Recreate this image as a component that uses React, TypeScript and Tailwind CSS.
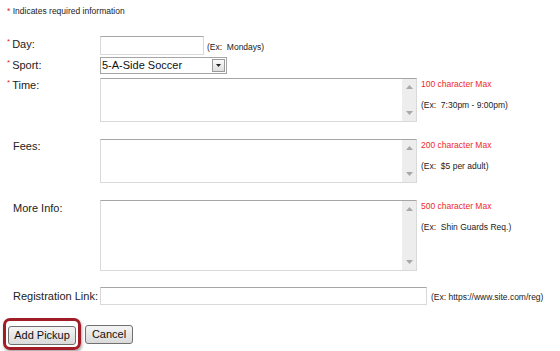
import type { ReactNode } from 'react'

const Req = () => <span className="mr-[2px] align-top text-[8px] leading-none text-[#e0252c]">*</span>

const Label = ({ text, required, className = '' }: { text: string; required?: boolean; className?: string }) => (
    <div className={`flex w-[100px] shrink-0 pl-[7px] text-[11px] leading-[13px] text-[#222] ${className}`}>
        {required ? <Req /> : <span className="w-[6px]" />}
        <span className="whitespace-nowrap">{text}</span>
    </div>
)

const Note = ({ children, red }: { children: ReactNode; red?: boolean }) => (
    <p className={`whitespace-pre text-[8.5px] leading-[10px] ${red ? 'text-[#ee2a2a]' : 'text-[#222]'}`}>{children}</p>
)

const Arrow = ({ down }: { down?: boolean }) => (
    <svg width="7" height="4" viewBox="0 0 7 4" className="mx-auto">
        <path d={down ? 'M0 0h7L3.5 4z' : 'M3.5 0L7 4H0z'} fill="#a8a8a8" />
    </svg>
)

const Area = ({ h, max, ex }: { h: string; max: string; ex: string }) => (
    <div className="flex">
        <div className={`flex w-[317px] ${h} border border-[#d9d9d9] border-t-[#a6a6a6] bg-white`}>
            <div className="flex-1" />
            <div className="flex w-[14px] flex-col justify-between bg-[#ededed] py-[6px]">
                <Arrow />
                <Arrow down />
            </div>
        </div>
        <div className="ml-[4px] pt-[1px]">
            <Note red>{max}</Note>
            <div className="h-[11px]" />
            <Note>{ex}</Note>
        </div>
    </div>
)

const btn =
    'h-[19px] rounded-[3px] border border-[#707070] bg-gradient-to-b from-[#f5f5f5] to-[#dadada] text-[11px] leading-none text-[#111]'

export default function App() {
    return (
        <div className="relative h-[351px] w-[560px] overflow-hidden bg-white font-['Liberation_Sans',Arial,sans-serif] text-[#222]">
            <p className="pl-[7px] pt-[7px] text-[8.5px] leading-[9px]">
                <span className="text-[#e0252c]">*</span> Indicates required information
            </p>

            {/* Day */}
            <div className="mt-[20px] flex h-[19px] items-center">
                <Label text="Day:" required className="-mt-[2px]" />
                <div className="h-[19px] w-[104px] border border-[#d9d9d9] border-t-[#a6a6a6] bg-white" />
                <span className="ml-[3px] mt-[3px] whitespace-pre text-[8.5px]">(Ex:  Mondays)</span>
            </div>

            {/* Sport */}
            <div className="mt-[2px] flex h-[17px] items-center">
                <Label text="Sport:" required />
                <div className="flex h-[17px] w-[127px] items-center border border-[#a5a5a5] bg-white pl-[1px] pr-[1px]">
                    <span className="flex-1 text-[11px] leading-none text-[#111]">5-A-Side Soccer</span>
                    <div className="flex h-[13px] w-[13px] items-center justify-center border border-[#9a9a9a] bg-gradient-to-b from-[#fbfbfb] to-[#dedede]">
                        <svg width="5" height="3" viewBox="0 0 5 3">
                            <path d="M0 0h5L2.5 3z" fill="#222" />
                        </svg>
                    </div>
                </div>
            </div>

            {/* Time */}
            <div className="mt-[4px] flex">
                <Label text="Time:" required className="pt-[1px]" />
                <Area h="h-[44px]" max="100 character Max" ex="(Ex:  7:30pm - 9:00pm)" />
            </div>

            {/* Fees */}
            <div className="mt-[17px] flex">
                <Label text="Fees:" className="pt-[1px]" />
                <Area h="h-[44px]" max="200 character Max" ex="(Ex:  $5 per adult)" />
            </div>

            {/* More Info */}
            <div className="mt-[17px] flex">
                <Label text="More Info:" className="pt-[2px]" />
                <Area h="h-[71px]" max="500 character Max" ex="(Ex:  Shin Guards Req.)" />
            </div>

            {/* Registration Link */}
            <div className="mt-[16px] flex h-[18px] items-center">
                <Label text="Registration Link:" />
                <div className="h-[18px] w-[327px] border border-[#d9d9d9] border-t-[#a6a6a6] bg-white" />
                <span className="ml-[4px] mt-[2px] text-[8.5px]">(Ex: https://www.site.com/reg)</span>
            </div>

            {/* Buttons */}
            <div className="mt-[13px] flex items-center pl-[3px]">
                <div className="rounded-[7px] border-[3px] border-[#a01c26] px-[2px] py-[1px] shadow-[1px_2px_3px_rgba(0,0,0,0.35)]">
                    <button className={`${btn} w-[68px]`}>Add Pickup</button>
                </div>
                <button className={`${btn} ml-[4px] w-[48px]`}>Cancel</button>
            </div>
        </div>
    )
}
